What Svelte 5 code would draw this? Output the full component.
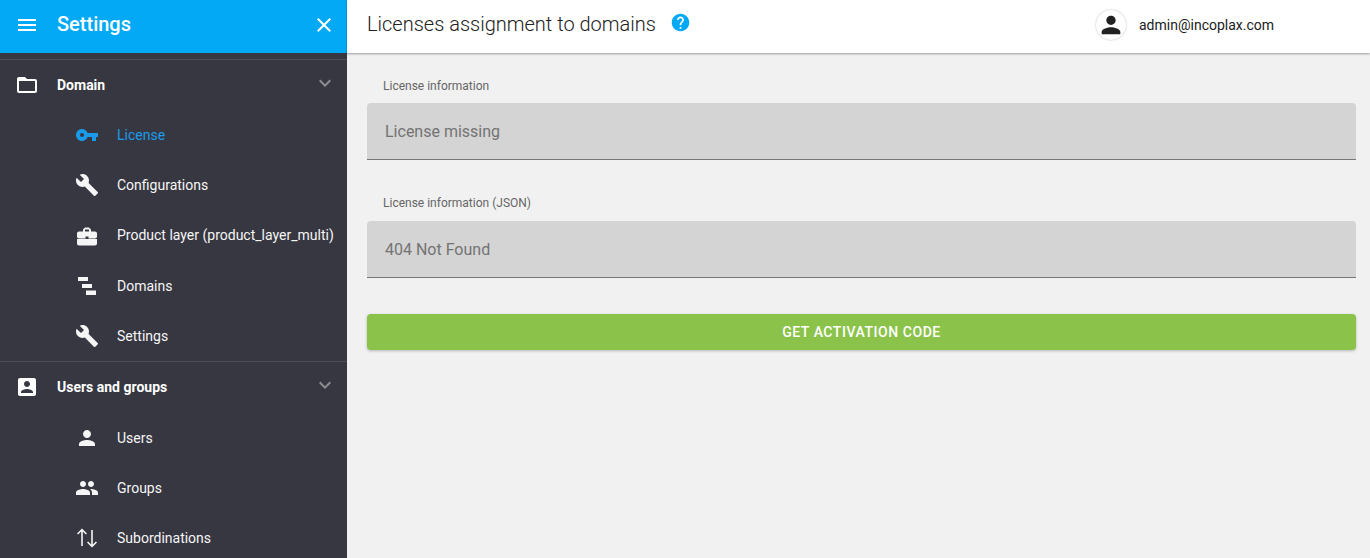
<script lang="ts">
  const ICONS = {
    menu: 'M3 18h18v-2H3v2zm0-5h18v-2H3v2zm0-7v2h18V6H3z',
    close: 'M19 6.41L17.59 5 12 10.59 6.41 5 5 6.41 10.59 12 5 17.59 6.41 19 12 13.41 17.59 19 19 17.59 13.41 12z',
    folder: 'M20 6h-8l-2-2H4c-1.1 0-1.99.9-1.99 2L2 18c0 1.1.9 2 2 2h16c1.1 0 2-.9 2-2V8c0-1.1-.9-2-2-2zm0 12H4V8h16v10z',
    expand: 'M16.59 8.59L12 13.17 7.41 8.59 6 10l6 6 6-6z',
    key: 'M12.65 10C11.83 7.67 9.61 6 7 6c-3.31 0-6 2.69-6 6s2.69 6 6 6c2.61 0 4.83-1.67 5.65-4H17v4h4v-4h2v-4H12.65zM7 14c-1.1 0-2-.9-2-2s.9-2 2-2 2 .9 2 2-.9 2-2 2z',
    build: 'M22.7 19l-9.1-9.1c.9-2.3.4-5-1.5-6.9-2-2-5-2.4-7.4-1.3L9 6 6 9 1.6 4.7C.4 7.1.9 10.1 2.9 12.1c1.9 1.9 4.6 2.4 6.9 1.5l9.1 9.1c.4.4 1 .4 1.4 0l2.3-2.3c.5-.4.5-1.1.1-1.4z',
    case: 'M2 16.1V20.5c0 1.11.89 2 2 2h16c1.11 0 2-.89 2-2v-4.4zM20 8.5h-4.01v-2l-2-2h-4l-2 2v2H4c-1.1 0-2 .9-2 2v3c0 1.11.89 2 2 2h6.5v-2h3v2H20c1.1 0 2-.9 2-2v-3c0-1.1-.9-2-2-2zm-6 0h-4v-2h4v2z',
    tree: 'M3 3h10v4H3zM7 10h10v4H7zM11 16.500h10V21H11z',
    box: 'M3 5v14c0 1.1.89 2 2 2h14c1.1 0 2-.9 2-2V5c0-1.1-.9-2-2-2H5c-1.11 0-2 .9-2 2zm12 4c0 1.66-1.34 3-3 3s-3-1.34-3-3 1.34-3 3-3 3 1.34 3 3zm-9 8c0-2 4-3.1 6-3.1s6 1.1 6 3.1v1H6v-1z',
    person: 'M12 12c2.21 0 4-1.79 4-4s-1.79-4-4-4-4 1.79-4 4 1.79 4 4 4zm0 2c-2.67 0-8 1.34-8 4v2h16v-2c0-2.66-5.33-4-8-4z',
    people: 'M16 11c1.66 0 2.99-1.34 2.99-3S17.66 5 16 5c-1.66 0-3 1.34-3 3s1.34 3 3 3zm-8 0c1.66 0 2.99-1.34 2.99-3S9.66 5 8 5C6.34 5 5 6.34 5 8s1.34 3 3 3zm0 2c-2.33 0-7 1.17-7 3.5V19h14v-2.5c0-2.33-4.67-3.5-7-3.5zm8 0c-.29 0-.62.02-.97.05 1.16.84 1.97 1.97 1.97 3.45V19h6v-2.500c0-2.33-4.67-3.5-7-3.5z',
    swap: 'M7 2.500L2 7.500l1.100 1.100 3.100-3.100V20h1.600V5.500l3.100 3.100L12 7.500zM17 21.500l5-5-1.100-1.100-3.100 3.100V4h-1.600v14.500l-3.100-3.100L12 16.500z',
    help: 'M12 2C6.48 2 2 6.48 2 12s4.48 10 10 10 10-4.48 10-10S17.52 2 12 2zm1 17h-2v-2h2v2zm2.07-7.75l-.9.92C13.45 12.9 13 13.5 13 15h-2v-.5c0-1.1.45-2.1 1.17-2.83l1.24-1.26c.37-.36.59-.86.59-1.41 0-1.1-.9-2-2-2s-2 .9-2 2H8c0-2.21 1.79-4 4-4s4 1.79 4 4c0 .88-.36 1.68-.93 2.25z'
  };

  const groups = [
    {
      title: 'Domain',
      icon: ICONS.folder,
      items: [
        { label: 'License', icon: ICONS.key, active: true },
        { label: 'Configurations', icon: ICONS.build },
        { label: 'Product layer (product_layer_multi)', icon: ICONS.case },
        { label: 'Domains', icon: ICONS.tree },
        { label: 'Settings', icon: ICONS.build }
      ]
    },
    {
      title: 'Users and groups',
      icon: ICONS.box,
      items: [
        { label: 'Users', icon: ICONS.person },
        { label: 'Groups', icon: ICONS.people },
        { label: 'Subordinations', icon: ICONS.swap }
      ]
    }
  ];

  const fields = [
    { label: 'License information', value: 'License missing' },
    { label: 'License information (JSON)', value: '404 Not Found' }
  ];
</script>

<div class="layout">
  <aside class="sidebar">
    <div class="side-head">
      <svg class="ico" viewBox="0 0 24 24"><path d={ICONS.menu} /></svg>
      <span class="side-title">Settings</span>
      <svg class="ico close" viewBox="0 0 24 24"><path d={ICONS.close} /></svg>
    </div>
    <nav class="nav">
      {#each groups as group}
        <section class="group">
          <div class="group-head">
            <svg class="ico" viewBox="0 0 24 24"><path d={group.icon} /></svg>
            <span class="group-title">{group.title}</span>
            <svg class="ico chevron" viewBox="0 0 24 24"><path d={ICONS.expand} /></svg>
          </div>
          {#each group.items as item}
            <div class="item" class:active={item.active}>
              <svg class="ico" viewBox="0 0 24 24"><path d={item.icon} /></svg>
              <span>{item.label}</span>
            </div>
          {/each}
        </section>
      {/each}
    </nav>
  </aside>

  <div class="content">
    <header class="topbar">
      <h1>Licenses assignment to domains</h1>
      <svg class="help" viewBox="0 0 24 24"><path d={ICONS.help} /></svg>
      <div class="user">
        <span class="avatar">
          <svg viewBox="0 0 24 24"><path d={ICONS.person} /></svg>
        </span>
        <span>admin@incoplax.com</span>
      </div>
    </header>
    <main class="form">
      {#each fields as field}
        <div class="field">
          <div class="field-label">{field.label}</div>
          <div class="field-value">{field.value}</div>
        </div>
      {/each}
      <button class="activate">Get activation code</button>
    </main>
  </div>
</div>

<style>
  :global(body) {
    margin: 0;
    font-family: Roboto, sans-serif;
    overflow: hidden;
  }
  .layout {
    display: flex;
    height: 558px;
    overflow: hidden;
    background: #f1f1f1;
  }
  .sidebar {
    width: 347px;
    flex: none;
    background: #373741;
    color: #fff;
    overflow: hidden;
  }
  .ico {
    width: 24px;
    height: 24px;
    flex: none;
    fill: currentColor;
  }
  .side-head {
    height: 53px;
    background: #03a9f4;
    display: flex;
    align-items: center;
    padding: 0 11px 4px 15px;
    box-sizing: border-box;
  }
  .side-title {
    margin: -2px 0 0 18px;
    font-size: 20px;
    font-weight: 500;
    flex: 1;
  }
  .nav {
    padding-top: 6px;
  }
  .group {
    border-top: 1px solid #4d4d56;
  }
  .group-head {
    height: 50px;
    display: flex;
    align-items: center;
    padding: 0 10px 0 15px;
    font-size: 14px;
    font-weight: 700;
  }
  .group + .group .group-head {
    height: 50.5px;
  }
  .group-title {
    margin-left: 18px;
    flex: 1;
  }
  .chevron {
    color: #8c8c92;
    margin-top: -4px;
  }
  .item {
    height: 50.2px;
    display: flex;
    align-items: center;
    padding-left: 75px;
    font-size: 14px;
    color: #f5f5f5;
  }
  .item span {
    margin-left: 18px;
  }
  .item.active {
    color: #1a9bea;
  }
  .content {
    flex: 1;
    min-width: 0;
  }
  .topbar {
    height: 53px;
    box-sizing: border-box;
    background: #fff;
    box-shadow: 0 1px 2px rgba(0, 0, 0, 0.35);
    display: flex;
    align-items: center;
    padding: 0 0 4px 20px;
    position: relative;
  }
  h1 {
    margin: -2px 0 0;
    font-size: 20px;
    font-weight: 300;
    color: #212121;
  }
  .help {
    width: 21px;
    height: 21px;
    fill: #03a9f4;
    margin: -5px 0 0 14px;
  }
  .user {
    margin-left: auto;
    width: 274px;
    display: flex;
    align-items: center;
    gap: 13px;
    font-size: 14px;
    color: #212121;
  }
  .avatar {
    width: 30px;
    height: 30px;
    border-radius: 50%;
    background: #fff;
    box-shadow: 0 0 2px rgba(0, 0, 0, 0.3);
    display: flex;
    align-items: center;
    justify-content: center;
  }
  .avatar svg {
    width: 28px;
    height: 28px;
    fill: #212121;
  }
  .form {
    padding: 26px 14px 0 20px;
  }
  .field {
    margin-bottom: 36px;
  }
  .field-label {
    font-size: 12px;
    line-height: 14px;
    color: #666;
    padding-left: 16px;
    margin-bottom: 10px;
  }
  .field + .field .field-label {
    margin-bottom: 11px;
  }
  .field-value {
    height: 57px;
    box-sizing: border-box;
    background: #d4d4d4;
    border-bottom: 1px solid #777;
    border-radius: 4px 4px 0 0;
    padding-left: 18px;
    display: flex;
    align-items: center;
    font-size: 16px;
    color: #737373;
  }
  .activate {
    display: block;
    width: 100%;
    height: 36px;
    border: 0;
    border-radius: 4px;
    background: #8bc34a;
    color: #fff;
    font-family: Roboto, sans-serif;
    font-size: 14px;
    font-weight: 500;
    letter-spacing: 0.55px;
    text-transform: uppercase;
    box-shadow: 0 1px 3px rgba(0, 0, 0, 0.25);
  }
</style>
